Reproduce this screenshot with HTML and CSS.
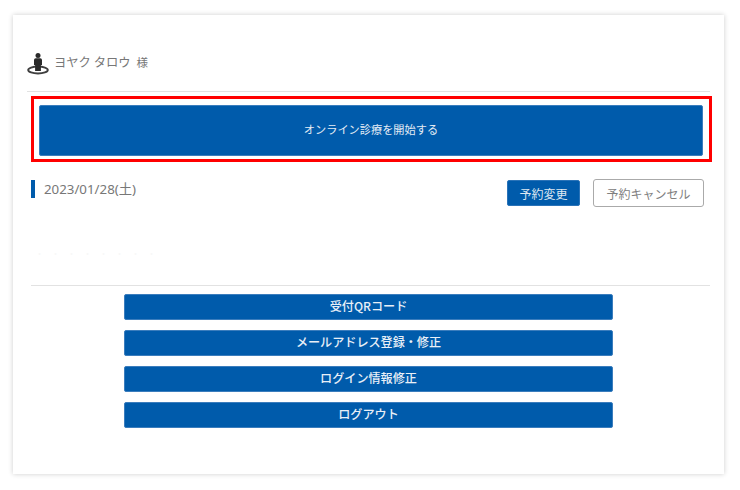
FILE: index.html
```html
<!DOCTYPE html>
<html lang="ja">
<head>
<meta charset="utf-8">
<title>オンライン診療</title>
<link rel="stylesheet" href="styles.css">
</head>
<body>
<main class="card">
  <header class="user">
    <svg class="user-icon" viewBox="0 0 24 24" width="24" height="24" aria-hidden="true">
      <ellipse cx="12" cy="19" rx="9.800" ry="3.500" fill="none" stroke="#3f3f3f" stroke-width="1.900"/>
      <circle cx="12" cy="4.600" r="2.500" fill="#2a2a2a"/>
      <path d="M8 9q0-1.800 1.800-1.800h4.400q1.800 0 1.800 1.800v5h-1.100v6h-5.800v-6h-1.100z" fill="#2a2a2a"/>
    </svg>
    <span class="user-name">ヨヤク タロウ</span>
    <span class="user-suffix">様</span>
  </header>
  <div class="start-frame">
    <button class="start-button">オンライン診療を開始する</button>
  </div>
  <section class="reservation">
    <div class="date">2023/01/28(土)</div>
    <div class="actions">
      <button class="btn-change">予約変更</button>
      <button class="btn-cancel">予約キャンセル</button>
    </div>
  </section>
  <div class="faint">・ ・ ・ ・ ・ ・ ・ ・</div>
  <nav class="menu">
    <button class="menu-button">受付QRコード</button>
    <button class="menu-button">メールアドレス登録・修正</button>
    <button class="menu-button">ログイン情報修正</button>
    <button class="menu-button">ログアウト</button>
  </nav>
</main>
</body>
</html>
```
FILE: styles.css
```css
* { box-sizing: border-box; }
html, body { margin: 0; height: 100%; background: #fff; }
body {
  padding: 15px 0 0 13px;
  font-family: "Noto Sans CJK JP", "Noto Sans", sans-serif;
  overflow: hidden;
}
button { font-family: inherit; cursor: pointer; margin: 0; padding: 0; }
.card {
  width: 711px;
  height: 459px;
  background: #fff;
  box-shadow: 0 0 5px rgba(0, 0, 0, 0.2);
  padding: 36px 14px 0 14px;
}
.user {
  display: flex;
  align-items: center;
  height: 24px;
  color: #777;
}
.user-icon { flex: none; margin-left: -1px; margin-right: 4px; }
.user-name { font-size: 12.300px; margin-right: 6px; padding-bottom: 2px; }
.user-suffix { font-size: 11.500px; padding-bottom: 2px; }
.start-frame {
  margin: 21px -2px 0 4px;
  padding: 6px 6px 3px 5px;
  height: 66px;
  border: 3px solid #f00;
  position: relative;
}
.start-frame::before {
  content: "";
  position: absolute;
  left: -7px;
  right: -1px;
  top: -8px;
  height: 1px;
  background: #e2e2e2;
}
.start-button {
  display: block;
  width: 100%;
  height: 100%;
  border: 1px solid #3b7dbd;
  border-radius: 2px;
  background: #005bab;
  color: #e4ecf5;
  font-size: 11.200px;
  padding-bottom: 3px;
}
.reservation {
  display: flex;
  justify-content: space-between;
  margin: 17px 6px 0 4px;
}
.date {
  height: 18px;
  border-left: 4px solid #005bab;
  padding-left: 9px;
  color: #777;
  font-family: "Noto Sans", "Noto Sans CJK JP", sans-serif;
  font-size: 13.300px;
  line-height: 18px;
  margin-top: 1px;
}
.actions { display: flex; align-items: center; gap: 13px; }
.btn-change {
  width: 73px;
  height: 26px;
  border: 1px solid #2a73b8;
  border-radius: 2px;
  background: #005bab;
  color: #dfe8f2;
  font-size: 12px;
}
.btn-cancel {
  width: 111px;
  height: 28px;
  border: 1px solid #aaa;
  border-radius: 3px;
  background: #fff;
  color: #808080;
  font-size: 12px;
}
.faint {
  margin: 40px 0 0 8px;
  height: 14px;
  color: #f8f8f8;
  font-size: 9px;
  line-height: 14px;
  letter-spacing: 2.500px;
}
.menu {
  margin: 24px 0 0 4px;
  width: 679px;
  border-top: 1px solid #e2e2e2;
  padding-top: 8px;
  display: flex;
  flex-direction: column;
  align-items: center;
  gap: 10px;
}
.menu-button {
  width: 489px;
  height: 26px;
  margin-right: 4px;
  border: 1px solid #3b7dbd;
  border-radius: 2px;
  background: #005bab;
  color: #e8eff7;
  font-size: 12.100px;
  font-weight: 500;
  padding-bottom: 4px;
}
```
